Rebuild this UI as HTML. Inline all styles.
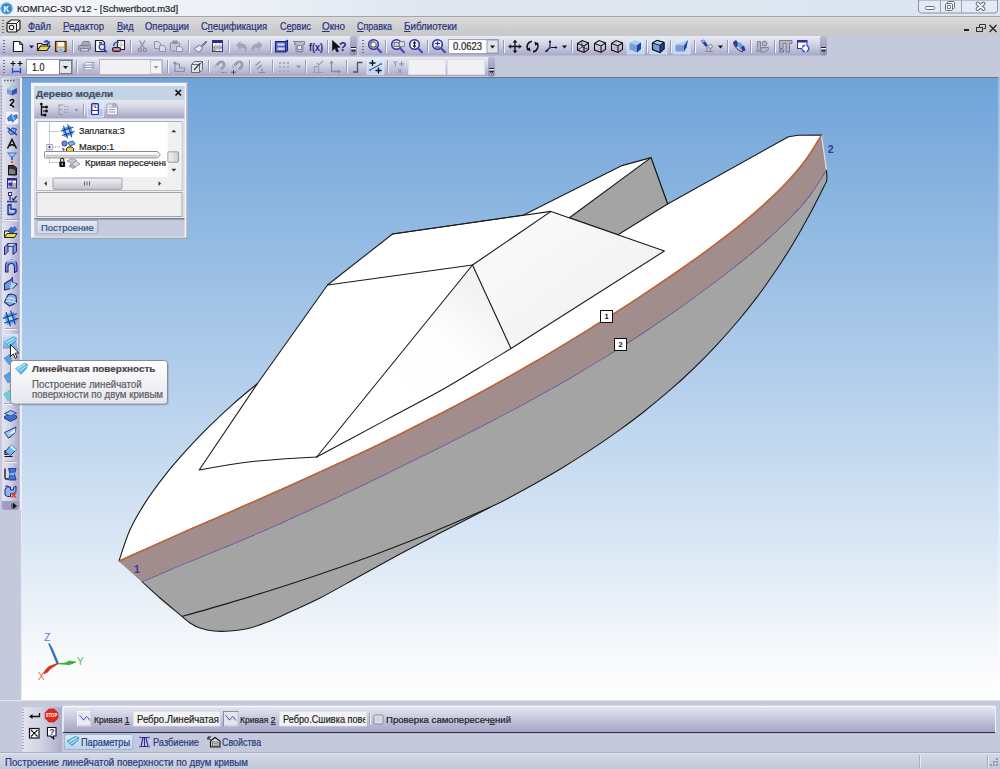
<!DOCTYPE html>
<html lang="ru">
<head>
<meta charset="utf-8">
<title>КОМПАС-3D V12 - [Schwertboot.m3d]</title>
<style>
html,body{margin:0;padding:0;}
body{width:1000px;height:769px;overflow:hidden;position:relative;background:#c4cadc;font-family:"Liberation Sans","DejaVu Sans",sans-serif;font-size:11px;color:#1a1a1a;}
.abs{position:absolute;}
.t{position:absolute;display:inline-block;white-space:nowrap;line-height:12px;transform-origin:0 50%;-webkit-text-stroke:0.2px currentColor;}
#titlebar{left:0;top:0;width:1000px;height:16px;background:linear-gradient(90deg,#f2f4f9 0,#eef1f7 22%,#e0e7f1 42%,#dce5f0 100%);}
#titletext{left:17px;top:1px;font-size:11px;line-height:14px;color:#222;white-space:nowrap;}
#menubar{left:0;top:16px;width:1000px;height:20px;background:linear-gradient(#dadadb,#cdcdcf 60%,#c8c8ca);border-top:1px solid #a4a6ac;box-sizing:border-box;}
.menu{top:19px;font-size:11px;line-height:13px;color:#27317f;white-space:nowrap;}
.menu u{text-decoration:underline;}
#tb1{left:0;top:36px;width:1000px;height:21px;background:#c4cadc;}
#tb2{left:0;top:57px;width:1000px;height:20px;background:#c4cadc;}
#viewport{left:21px;top:77px;width:979px;height:623px;background:linear-gradient(#6fa3d8 0%,#b5d0ec 50%,#dae7f5 75%,#f3f6fa 90%,#ffffff 100%);border-top:1px solid #75757c;border-left:1px solid #e9ecf3;border-right:2px solid rgba(255,255,255,.3);box-sizing:border-box;}
#leftbar{left:0;top:77px;width:22px;height:623px;background:#c4cadc;}
#bottom{left:0;top:700px;width:1000px;height:53px;background:#c4cadc;}
#status{left:0;top:753px;width:1000px;height:16px;background:#c4cadc;}
</style>
</head>
<body>
<div id="titlebar" class="abs"></div>
<div id="menubar" class="abs"></div>
<div id="tb1" class="abs"></div>
<div id="tb2" class="abs"></div>

<svg id="topsvg" class="abs" style="left:0;top:0" width="1000" height="77" viewBox="0 0 1000 77">
<defs>
<linearGradient id="tbg" x1="0" y1="0" x2="0" y2="1">
<stop offset="0" stop-color="#e9ebf3"/><stop offset="0.35" stop-color="#d6d8e8"/><stop offset="0.8" stop-color="#b7b6d4"/><stop offset="1" stop-color="#a9a7c9"/>
</linearGradient>
<linearGradient id="chv" x1="0" y1="0" x2="0" y2="1">
<stop offset="0" stop-color="#b9b9d3"/><stop offset="1" stop-color="#8f8db3"/>
</linearGradient>
<linearGradient id="hl" x1="0" y1="0" x2="0" y2="1">
<stop offset="0" stop-color="#dcebf8"/><stop offset="1" stop-color="#bcd6f0"/>
</linearGradient>
<g id="sep"><rect x="0" y="0" width="1" height="13" fill="#9b9ab6"/><rect x="1" y="0" width="1" height="13" fill="#f1f2f8"/></g>
<g id="grip" fill="#6f6f8c"><rect x="0" y="0" width="2" height="1"/><rect x="0" y="3" width="2" height="1"/><rect x="0" y="6" width="2" height="1"/><rect x="0" y="9" width="2" height="1"/><rect x="0" y="12" width="2" height="1"/></g>
<path id="dd" d="M0 0h5l-2.5 3z"/>
<g id="chev"><rect x="0" y="0" width="7" height="19.500" rx="2" fill="url(#chv)"/><rect x="1" y="12" width="5" height="1" fill="#fff"/><rect x="1" y="11" width="5" height="1" fill="#222"/><path d="M1 14h5l-2.5 3z" fill="#222"/><path d="M2 17.5l2-2.500" stroke="#fff" stroke-width="0.6" fill="none"/></g>
</defs>
<!-- toolbars backgrounds -->
<path d="M2 36h350v19.500H2a2 2 0 0 1-2-2V38a2 2 0 0 1 2-2z" fill="url(#tbg)"/>
<use href="#chev" x="350" y="36"/>
<path d="M361 36h460v19.500H361a2 2 0 0 1-2-2V38a2 2 0 0 1 2-2z" fill="url(#tbg)"/>
<use href="#chev" x="820" y="36"/>
<path d="M2 57h487v19H2a2 2 0 0 1-2-2V59a2 2 0 0 1 2-2z" fill="url(#tbg)"/>
<use href="#chev" x="488" y="57" transform="translate(0,0)"/>
<!-- app logo -->
<circle cx="6.600" cy="8.500" r="6.100" fill="#2e86d0"/><circle cx="6.600" cy="8.500" r="5.400" fill="none" stroke="#7cc0ee" stroke-width="1"/>
<text x="3.300" y="11.800" font-family="Liberation Sans, sans-serif" font-size="9.500" font-weight="bold" fill="#fff">К</text>
<!-- menu icon -->
<g transform="translate(6,19)"><path d="M1 4l4-3h8l1 1v8l-4 3H2l-1-1z" fill="#f2f2f2" stroke="#222" stroke-width="1.2"/><path d="M1.500 4.500h9v8M10.500 4.500l3-3" fill="none" stroke="#222" stroke-width="1"/><circle cx="5.500" cy="8.500" r="2.200" fill="#fff" stroke="#222" stroke-width="1.100"/></g>
<!-- window controls -->
<path d="M918.500 0v10a3 3 0 0 0 3 3h73a3 3 0 0 0 3-3V0z" fill="#e3eaf5" stroke="#8c93a3" stroke-width="1"/>
<path d="M940.500 0v13M961.500 0v13" stroke="#9aa1b1" stroke-width="1"/>
<rect x="925.500" y="6.500" width="9" height="3" rx="1" fill="#fff" stroke="#666b78" stroke-width="1"/>
<rect x="947.500" y="1.500" width="7" height="7" rx="1" fill="#f4f6fa" stroke="#666b78" stroke-width="1"/>
<rect x="945.500" y="3.500" width="7" height="7" rx="1" fill="#f4f6fa" stroke="#666b78" stroke-width="1"/>
<rect x="947.500" y="5.500" width="3" height="3" fill="#fff" stroke="#666b78" stroke-width="0.800"/>
<path d="M977.500 3.500l6 5.500M983.500 3.500l-6 5.500" stroke="#666b78" stroke-width="3.800" stroke-linecap="round"/>
<path d="M977.500 3.500l6 5.500M983.500 3.500l-6 5.500" stroke="#fff" stroke-width="1.800" stroke-linecap="round"/>
<!-- mdi controls -->
<rect x="964" y="29" width="5" height="2" fill="#222"/>
<path d="M979.500 27.500v-3h6v4h-2" fill="none" stroke="#333" stroke-width="1"/><rect x="976.500" y="27.500" width="6" height="4" fill="none" stroke="#333" stroke-width="1"/>
<path d="M989.500 25l7 7M996.500 25l-7 7" stroke="#222" stroke-width="1.300"/>
<!-- grips -->
<use href="#grip" x="2" y="20"/>
<use href="#grip" x="3" y="40"/><use href="#grip" x="362" y="40"/><use href="#grip" x="3" y="60"/>
<!-- TB1 separators -->
<use href="#sep" x="72" y="40"/><use href="#sep" x="130" y="40"/><use href="#sep" x="188" y="40"/><use href="#sep" x="228" y="40"/><use href="#sep" x="270" y="40"/><use href="#sep" x="327" y="40"/>
<use href="#sep" x="385" y="40"/><use href="#sep" x="427" y="40"/><use href="#sep" x="503" y="40"/><use href="#sep" x="571" y="40"/><use href="#sep" x="646" y="40"/><use href="#sep" x="670" y="40"/><use href="#sep" x="694" y="40"/><use href="#sep" x="727" y="40"/><use href="#sep" x="750" y="40"/><use href="#sep" x="774" y="40"/>
<!-- TB2 separators -->
<use href="#sep" x="76" y="60"/><use href="#sep" x="167" y="60"/><use href="#sep" x="208" y="60"/><use href="#sep" x="249" y="60"/><use href="#sep" x="272" y="60"/><use href="#sep" x="305" y="60"/><use href="#sep" x="346" y="60"/><use href="#sep" x="387" y="60"/>
<!-- TB1 icons -->
<!-- new -->
<path d="M13.500 41.500h6l3 3v7h-9z" fill="#fff" stroke="#222" stroke-width="1.200"/><path d="M19.500 41.500v3h3" fill="none" stroke="#222" stroke-width="0.800"/>
<use href="#dd" x="29" y="45.500" fill="#222"/>
<!-- open -->
<path d="M37.500 50.500v-7h4l1 1h5v2" fill="#f4ecaa" stroke="#222" stroke-width="1.100"/><path d="M37.500 50.500l3-4.500h9.500l-3 4.500z" fill="#e8d84e" stroke="#222" stroke-width="1.100"/><path d="M44 41.500c2-1.800 4-1.500 5 0.500l1-0.600-0.500 3-2.800-0.800 1-0.600c-0.800-1.200-2-1.300-3.200-0.500z" fill="#2a4fc0" stroke="#2a4fc0" stroke-width="0.500"/>
<!-- save -->
<rect x="55.500" y="41.500" width="10.500" height="10" fill="#c89a3c" stroke="#3a2a10" stroke-width="1.200"/><rect x="57.500" y="42" width="6.500" height="4.500" fill="#f3f3f3"/><rect x="58" y="48" width="5.500" height="3.500" fill="#8ab4e8" stroke="#fff" stroke-width="0.500"/>
<!-- print (gray) -->
<g fill="#a9adb8" stroke="#777b88" stroke-width="0.900"><path d="M81.500 45.500l1.500-4h6l1.500 4"/><rect x="78.500" y="45.500" width="12" height="4.500" rx="1"/><rect x="80.500" y="48.500" width="8" height="2.500" fill="#d9dbe2"/></g>
<!-- preview -->
<path d="M95.500 40.500h7l2 2v9h-9z" fill="#fff" stroke="#222" stroke-width="1.200"/><circle cx="102" cy="47" r="2.800" fill="#d8e6f8" stroke="#2b3fa8" stroke-width="1.300"/><path d="M104 49.200l3 3" stroke="#2b3fa8" stroke-width="1.600"/><rect x="99" y="42" width="3" height="1.500" fill="#444"/>
<!-- icon3 -->
<rect x="117.500" y="40.500" width="7" height="9" fill="#fff" stroke="#222" stroke-width="1.100"/><path d="M121 40.500v9M117.500 45h7" stroke="#555" stroke-width="0.700" stroke-dasharray="1 1"/><rect x="112.500" y="47.500" width="8" height="4" rx="1" fill="#c44" stroke="#222" stroke-width="1"/><rect x="114" y="48.500" width="5" height="1.500" fill="#8ab4e8"/><path d="M113 46c0-3 2-4.500 4-4.500l0-1.200 2.200 2-2.200 2 0-1.200c-1.500 0-2.500 1-2.500 2.900z" fill="#2a4fc0"/>
<!-- scissors gray -->
<g stroke="#8a8ea0" stroke-width="1.200" fill="none"><path d="M139.500 40.500l5 8M145 40.500l-5 8"/><circle cx="139.800" cy="50" r="1.600"/><circle cx="144.800" cy="50" r="1.600"/></g>
<!-- copy gray -->
<g fill="#d5d7e0" stroke="#9094a6" stroke-width="1"><path d="M154.500 41.500h4l2 2v5h-6z"/><path d="M159.500 45.500h4l2 2v4h-6z"/></g>
<!-- paste gray -->
<g fill="#c4c6d2" stroke="#8c90a2" stroke-width="1"><rect x="170.500" y="42.500" width="9" height="8.500" rx="1"/><rect x="173" y="41" width="4" height="2.500" fill="#9a9eae"/><path d="M176.500 46.500h4l2 2v3h-6z" fill="#e2e3ea"/></g>
<!-- brush -->
<g stroke="#70748a" stroke-width="1" fill="#e8e9f0"><path d="M201.500 45.500l4.500-4.500 1 1-4.500 4.500z" fill="#8d8fa8"/><path d="M194.500 48.500l5-3.500 3 3-3 4c-2.500 0-4-1.500-5-3.500z"/></g>
<!-- table -->
<rect x="212.500" y="40.500" width="10" height="11" fill="#fff" stroke="#3a3a7a" stroke-width="1"/><rect x="212.500" y="40.500" width="10" height="2.500" fill="#2b2b8c"/><path d="M216 43v8.500M219.500 43v8.500M212.500 46h10M212.500 49h10" stroke="#8a8aa8" stroke-width="0.600"/><rect x="213.200" y="46.400" width="2.300" height="2.200" fill="#c08a3a"/><rect x="216.500" y="46.400" width="2.500" height="2.200" fill="#8a98e0"/><rect x="220" y="46.400" width="2" height="2.200" fill="#8a98e0"/><rect x="213.200" y="49.400" width="2.300" height="1.800" fill="#c08a3a"/>
<!-- undo/redo gray -->
<path d="M236 45l4.500-4v2.500c4 0 6.500 2 6.500 5.500 0 1.500-0.800 2.500-2 3.200 0.800-3-1-4.200-4.500-4.200v2.500z" fill="#a2a5b6"/>
<path d="M262.500 45l-4.500-4v2.500c-4 0-6.500 2-6.500 5.500 0 1.500 0.800 2.500 2 3.200-0.800-3 1-4.200 4.500-4.200v2.500z" fill="#a2a5b6"/>
<!-- blue panel -->
<path d="M275.500 41.500h10l2-1v10l-2 1.500h-10z" fill="#5468c8" stroke="#1c2470" stroke-width="1.100"/><rect x="277.500" y="43.500" width="7" height="2" fill="#dfe6f8"/><rect x="277.500" y="47.500" width="7" height="2.500" fill="#cfd8f4"/><path d="M285.500 41.500v10.500" stroke="#1c2470" stroke-width="0.800"/>
<!-- gray icon -->
<g fill="#b9bbc8" stroke="#7d8092" stroke-width="0.900"><path d="M294.500 41.500h10v3h-1.500v7h-7v-7h-1.500z"/><rect x="297.500" y="45.500" width="4" height="4" fill="#e8e9ef"/><path d="M293 41l2.500 1.500M297 52h1.500M300.500 52h1.500" fill="none"/></g>
<!-- f(x) -->
<text x="309" y="50.500" font-family="Liberation Sans, sans-serif" font-size="11" font-weight="bold" fill="#2c1c7c" textLength="14" lengthAdjust="spacingAndGlyphs">f(x)</text>
<!-- cursor ? -->
<path d="M332.500 40.500v10l2.500-2.300 1.800 3.800 1.700-0.800-1.800-3.700 3.300-0.200z" fill="#111" stroke="#111" stroke-width="0.600"/><text x="339" y="51" font-family="Liberation Sans, sans-serif" font-size="12.500" font-weight="bold" fill="#2c2c8c">?</text>
<!-- zoom icons -->
<g id="mag1"><circle cx="373.500" cy="44.500" r="4.800" fill="#e6eefb" stroke="#2f2f96" stroke-width="1.500"/><path d="M377 48.200l4 4" stroke="#4a4ab0" stroke-width="2.200" stroke-linecap="round"/></g>
<path d="M371 42h3.500l1.500 1.500v3.500h-5z" fill="#fff" stroke="#222" stroke-width="0.900"/>
<use href="#mag1" x="23"/><rect x="394" y="42.500" width="5" height="4" fill="#c9d4e8" stroke="#555" stroke-width="0.800"/><rect x="399.500" y="41.500" width="5" height="5" fill="#d9dbe2" stroke="#777" stroke-width="0.800"/>
<use href="#mag1" x="41"/><path d="M414.500 41l1.800 2.500h-3.600zM414.500 48l1.800-2.500h-3.600z" fill="#111"/><rect x="414" y="43" width="1" height="3" fill="#111"/>
<use href="#mag1" x="64"/><path d="M435 43.500h5M437.500 41.500v4M435 47h5" stroke="#2f2f96" stroke-width="1"/>
<!-- zoom field -->
<rect x="448.500" y="39.500" width="50" height="14" fill="#fff" stroke="#a3a6b8" stroke-width="1"/>
<rect x="487" y="40" width="11" height="13" fill="#e1e3ea" stroke="#8b8e9e" stroke-width="0.800"/><use href="#dd" x="490" y="45.500" fill="#111"/>
<!-- move -->
<g stroke="#111" stroke-width="1.300" fill="#111"><path d="M515 41.500v10M510 46.500h10" fill="none"/><path d="M515 40l1.800 2.300h-3.600zM515 53l1.800-2.300h-3.600zM508.500 46.500l2.300-1.800v3.600zM521.500 46.500l-2.300-1.800v3.600z" stroke-width="0.500"/></g>
<!-- rotate -->
<g fill="none" stroke="#111" stroke-width="1.500"><path d="M532 41.200A5.600 5.600 0 0 0 528.300 50.200"/><path d="M533 51.800A5.600 5.600 0 0 0 536.700 42.800"/></g><path d="M526.300 49.200l4.200 2.300-0.600-4.300zM538.700 43.800l-4.200-2.300 0.600 4.300z" fill="#111"/>
<!-- axes -->
<g stroke="#111" stroke-width="1.100" fill="none"><path d="M550 47.500v-6M550 47.500l6 0M550 47.500l-4 4"/></g><path d="M550 40l1.500 2.200h-3zM557.500 47.500l-2.200 1.500v-3zM545.300 52.200l0.600-2.700 2 2z" fill="#111"/><circle cx="550" cy="47.500" r="1.200" fill="#4848c8"/>
<use href="#dd" x="562" y="45.500" fill="#111"/>
<!-- cubes -->
<g id="cubeo" fill="none" stroke="#111" stroke-width="1.100"><path d="M577.500 43.500l4.500-3 6.500 2.500v6.500l-4.500 3-6.500-2.500z"/><path d="M577.500 43.500l6.500 2.500 4.500-3M584 46v6.500"/></g>
<path d="M582 40.500v6.500l-4.500 3M582 47l6.500 2.500" fill="none" stroke="#111" stroke-width="0.700"/>
<use href="#cubeo" x="17"/>
<use href="#cubeo" x="34"/><path d="M616 40.500v6.500l-4.500 3M616 47l6.500 2.500" fill="none" stroke="#777" stroke-width="0.600" stroke-dasharray="1 1"/>
<!-- shaded highlighted -->
<rect x="627" y="38" width="17" height="16" fill="url(#hl)" stroke="#dbe8f6" stroke-width="0.600"/>
<path d="M629.500 43l5.500-2.500 6 2v6.500l-4 3.500-7.500-3z" fill="#7e9bd8"/><path d="M629.500 43l5.500-2.500 6 2-4 2.800z" fill="#9fd8d8"/><path d="M637 45.300l4-2.800v6.500l-4 3.500z" fill="#2c3aa8"/>
<rect x="650" y="38" width="17" height="16" fill="url(#hl)" stroke="#dbe8f6" stroke-width="0.600"/>
<path d="M652.500 43l4.500-2.500 7 2v6.500l-4 3.500-7.500-3z" fill="#7e9bd8" stroke="#111" stroke-width="1.200"/><path d="M652.500 43l4.500-2.500 7 2-4 2.800z" fill="#9fd8d8" stroke="#111" stroke-width="0.900"/><path d="M660 45.300l4-2.800v6.500l-4 3.500z" fill="#2c3aa8" stroke="#111" stroke-width="0.900"/>
<rect x="673" y="38" width="17" height="16" fill="url(#hl)" stroke="#dbe8f6" stroke-width="0.600"/>
<path d="M675.500 45l10-3.500 2.500-1.500-4 11.500h-8.500z" fill="#7e9bd8"/><path d="M684 45.500l4-5.500-1.500 7.500-2.500 4z" fill="#2c3aa8"/><path d="M675.500 45l10-3.500 2.500-1.500-4 5.500z" fill="#a8d4e0"/>
<!-- flashlight -->
<path d="M700.500 41l3.500-1.500 4 6-2 1.500z" fill="#2c3aa8"/><path d="M701 41l3 -1.300 1.200 1.800-3 1.500z" fill="#88b0e8"/><circle cx="710.500" cy="46.500" r="1.800" fill="#e8e9ef" stroke="#777" stroke-width="0.900"/><path d="M705 51.500h8M710.500 48.500v3M707 47v4.500" stroke="#888" stroke-width="0.900" fill="none"/>
<use href="#dd" x="718" y="45.500" fill="#111"/>
<!-- blue shapes -->
<path d="M733 42l3-2 3 4-2.500 3.500z" fill="#2c3aa8"/><path d="M737 44l3-2 4 5-3 3z" fill="#5aa8e0"/><path d="M741 47l3-1.500 1.500 5-3 1z" fill="#2c3aa8"/><path d="M733.500 43c1 4 5 8 9.500 9" stroke="#222" stroke-width="0.900" fill="none"/>
<!-- gray icon 12 -->
<g fill="#b4b6c6" stroke="#7a7d90" stroke-width="0.900"><path d="M757.500 41.500h3v7l-1.500 3h-2z"/><circle cx="764.500" cy="43.500" r="2.500"/><path d="M761.500 47.500h7v2l-3 2.500h-5z"/></g>
<!-- gray T -->
<g fill="#b4b6c6" stroke="#70738a" stroke-width="0.900"><path d="M779.500 40.500h12.500v3h-2.500v8.500h-3.500v-8.500h-3v5h-3.500z"/><rect x="779.500" y="50" width="4" height="2"/></g>
<!-- window refresh -->
<rect x="797.500" y="40.500" width="9.500" height="8" fill="#fff" stroke="#3a2a9a" stroke-width="1"/><rect x="797.500" y="40.500" width="9.500" height="2" fill="#3a2a9a"/><circle cx="805.500" cy="48.500" r="3.300" fill="#fff" stroke="#2a5fd0" stroke-width="1.500" stroke-dasharray="4 1.500"/>
<!-- TB2 icons -->
<g stroke="#111" stroke-width="1.200" fill="none"><path d="M13 61v5M10.500 63.500h5M20 61v5M17.500 63.500h5"/></g><path d="M12.500 67.500v6M20.500 67.500v6M13 71.500h7" stroke="#2b4fd0" stroke-width="1.300" fill="none"/>
<rect x="26.500" y="59.500" width="46" height="15" fill="#fff" stroke="#9a9db2" stroke-width="1"/><rect x="59.500" y="60.500" width="12" height="13" fill="#e4e5ec" stroke="#777a8c" stroke-width="1"/><use href="#dd" x="63" y="66" fill="#111"/>
<g fill="#eeeef3" stroke="#9da0b2" stroke-width="0.900"><path d="M82.500 70l4-2.500h8l-4 2.500z"/><path d="M82.500 67.500l4-2.500h8l-4 2.500z"/><path d="M82.500 65l4-2.500h8l-4 2.500z"/></g>
<rect x="99.500" y="59.500" width="63" height="15" fill="#f1f1f3" stroke="#b3b5c6" stroke-width="1"/><rect x="150.500" y="60.500" width="11" height="13" fill="#f6f6f8" stroke="#c0c2d0" stroke-width="0.800"/><use href="#dd" x="153.500" y="66" fill="#9a9cae"/>
<g fill="none" stroke="#8a8da2" stroke-width="1.100"><path d="M175 61.500v10h9.500M175 64h4.500v4h5v3.500"/><rect x="173.500" y="62" width="3" height="2" fill="#8a8da2" stroke="none"/></g>
<g fill="#e1e2ea" stroke="#666a80" stroke-width="1"><path d="M191.500 64.500l3-3h8v8l-3 3h-8z"/><path d="M191.500 64.500h8v8M199.500 64.500l3-3" fill="none"/><path d="M194 70l6-6.500" stroke="#444" stroke-width="1.200"/></g>
<g transform="translate(220.500,65.500) rotate(45)"><path d="M-3 5V-1A3 3 0 0 1 3 -1V5" fill="none" stroke="#9a9cb2" stroke-width="2.800"/><path d="M-4.400 3.500h2.800M1.600 3.500h2.800" stroke="#dcdde6" stroke-width="1"/></g><path d="M221 72.500h1M223 72.500h1M225 72.500h1" stroke="#777" stroke-width="1"/>
<g transform="translate(238.500,65.500) rotate(45)"><path d="M-3 5V-1A3 3 0 0 1 3 -1V5" fill="none" stroke="#9a9cb2" stroke-width="2.800"/><path d="M-4.400 3.500h2.800M1.600 3.500h2.800" stroke="#dcdde6" stroke-width="1"/></g><path d="M233.500 70v4.500M231.200 72.200h4.600" stroke="#444" stroke-width="0.900"/>
<g stroke="#8a8da2" stroke-width="1.100" fill="none"><path d="M255.500 65.500l5-4M257 69l5-4M259 72.500h6M262 72.500v-4"/></g>
<g fill="#a9abbc"><rect x="279" y="62" width="2" height="2"/><rect x="283" y="62" width="2" height="2"/><rect x="287" y="62" width="2" height="2"/><rect x="279" y="66" width="2" height="2"/><rect x="283" y="66" width="2" height="2"/><rect x="287" y="66" width="2" height="2"/><rect x="279" y="70" width="2" height="2"/><rect x="283" y="70" width="2" height="2"/><rect x="287" y="70" width="2" height="2"/></g><use href="#dd" x="296" y="65.500" fill="#8f92a6"/>
<g stroke="#9a9db0" stroke-width="1.100" fill="none"><path d="M313 72.500h10M314.500 72.500v-6h4v6M317 63l2 2 4-4"/></g>
<g stroke="#8a8da2" stroke-width="1.300" fill="none"><path d="M331.500 62v9.500h8"/></g><path d="M331.500 60.500l2 2.800h-4zM341 71.500l-2.800 2v-4z" fill="#8a8da2"/>
<path d="M353 72h4.500v-9.500h5" stroke="#555" stroke-width="1.300" fill="none"/>
<rect x="367" y="58" width="17" height="16.500" fill="url(#hl)" stroke="#e4eef9" stroke-width="0.600"/>
<path d="M370 70l11-6" stroke="#3a3a9a" stroke-width="1"/><circle cx="370" cy="70" r="1" fill="#5a5ad0"/><circle cx="381" cy="64" r="1" fill="#5a5ad0"/><path d="M372.500 60v6M369.500 63h6M378.500 67.500v6M375.500 70.500h6" stroke="#111" stroke-width="1.300"/>
<g stroke="#8a8da2" stroke-width="1" fill="none"><path d="M393.500 61l1.800 2.500 1.800-2.500M395.300 63.500v3M398 69l3.500 4M401.500 69l-3.500 4M401.500 61.500v5M399 64h5"/></g>
<rect x="408.500" y="59.500" width="37" height="15" fill="#f1f1f3" stroke="#dcdde6" stroke-width="1"/><rect x="447.500" y="59.500" width="37" height="15" fill="#f1f1f3" stroke="#dcdde6" stroke-width="1"/>

</svg>
<div id="leftbar" class="abs"></div>
<div id="viewport" class="abs"></div>
<!--BOAT-START-->
<svg id="boat" class="abs" style="left:22px;top:77px" width="978" height="623" viewBox="22 77 978 623">
<defs>
<linearGradient id="wing" x1="0" y1="0" x2="1" y2="1"><stop offset="0" stop-color="#fcfcfc"/><stop offset="1" stop-color="#eeeeee"/></linearGradient>
<linearGradient id="tri" gradientUnits="userSpaceOnUse" x1="400" y1="400" x2="500" y2="290"><stop offset="0" stop-color="#ffffff"/><stop offset="0.5" stop-color="#fdfdfd"/><stop offset="1" stop-color="#f0f0f0"/></linearGradient>
</defs>
<path d="M142.0 581.6 C145.0 584.3 153.3 592.2 160.0 598.0 C166.7 603.8 177.0 612.2 182.0 616.4 C187.0 620.6 187.0 621.1 190.0 623.0 C193.0 624.9 196.0 626.7 200.0 628.0 C204.0 629.3 209.0 630.5 214.0 631.0 C219.0 631.5 224.0 631.5 230.0 631.0 C236.0 630.5 243.3 629.7 250.0 628.0 C256.7 626.3 263.3 623.7 270.0 621.0 C276.7 618.3 281.7 615.8 290.0 612.0 C298.3 608.2 308.3 604.0 320.0 598.0 C331.7 592.0 346.7 583.3 360.0 576.0 C373.3 568.7 386.7 561.2 400.0 554.0 C413.3 546.8 426.7 539.9 440.0 533.0 C453.3 526.1 468.6 518.4 480.0 512.5 C491.4 506.6 499.2 502.9 508.7 497.9 C518.2 492.9 527.6 487.8 537.0 482.5 C546.4 477.2 555.7 471.8 564.9 466.2 C574.1 460.6 583.1 454.8 592.1 448.9 C601.1 443.0 610.0 436.9 618.7 430.6 C627.4 424.3 636.1 417.9 644.5 411.2 C652.9 404.5 661.2 397.7 669.3 390.7 C677.4 383.7 685.4 376.4 693.1 369.0 C700.8 361.6 708.4 353.9 715.7 346.1 C723.0 338.3 730.2 330.2 737.1 322.0 C744.0 313.8 750.7 305.4 757.2 296.8 C763.7 288.2 769.9 279.4 775.9 270.5 C781.9 261.6 787.8 252.5 793.3 243.3 C798.8 234.1 804.1 224.7 809.2 215.3 C814.3 205.9 820.9 192.5 823.8 186.7 C826.7 180.8 826.4 183.0 826.8 180.2 C827.2 177.4 826.5 171.4 826.4 169.7 L826.4 169.7 C823.7 173.9 816.1 186.9 810.1 194.8 C804.1 202.7 797.4 210.0 790.5 217.2 C783.6 224.4 776.3 231.1 768.9 237.8 C761.5 244.5 753.9 251.0 746.2 257.3 C738.5 263.6 730.6 269.8 722.7 275.9 C714.8 282.0 706.8 288.0 698.7 293.9 C690.7 299.8 682.6 305.6 674.4 311.3 C666.2 317.0 658.0 322.7 649.7 328.2 C641.4 333.7 633.1 339.1 624.7 344.5 C616.3 349.9 607.9 355.2 599.4 360.4 C590.9 365.6 582.4 370.7 573.8 375.7 C565.2 380.7 556.5 385.7 547.8 390.6 C539.1 395.5 530.4 400.3 521.6 405.0 C512.8 409.7 504.0 414.4 495.1 419.0 C486.2 423.6 477.4 428.2 468.5 432.8 C459.6 437.4 450.6 441.8 441.7 446.3 C432.8 450.8 423.8 455.2 414.9 459.6 C406.0 464.0 397.1 468.4 388.1 472.7 C379.2 477.0 370.2 481.4 361.2 485.7 C352.2 490.0 343.2 494.3 334.2 498.5 C325.2 502.7 316.2 506.9 307.1 511.0 C298.1 515.1 289.0 519.3 279.9 523.4 C270.8 527.5 261.6 531.4 252.4 535.4 C243.2 539.4 233.9 543.2 224.6 547.1 C215.3 551.0 206.1 554.7 196.8 558.5 C187.6 562.3 178.2 566.0 169.1 569.9 C160.0 573.8 146.5 579.6 142.0 581.6 Z" fill="#a4a4a4" stroke="#1a1a1a" stroke-width="1.100" stroke-linejoin="round"/>
<path d="M182.0 616.4 C189.5 614.3 212.1 608.0 227.0 603.6 C241.9 599.2 256.8 594.8 271.7 590.1 C286.6 585.4 301.4 580.6 316.1 575.6 C330.9 570.6 345.6 565.5 360.2 560.1 C374.8 554.8 389.3 549.2 403.8 543.5 C418.3 537.8 432.7 531.9 447.1 525.9 C461.5 519.9 482.9 510.4 490.0 507.3" fill="none" stroke="#1a1a1a" stroke-width="1.100"/>
<path d="M119.0 561.0 C123.7 558.9 137.7 552.6 147.0 548.4 C156.3 544.2 165.7 540.0 175.1 535.9 C184.5 531.8 193.9 527.7 203.3 523.6 C212.7 519.5 222.2 515.4 231.6 511.3 C241.0 507.2 250.3 503.0 259.7 498.9 C269.1 494.8 278.4 490.7 287.8 486.5 C297.2 482.3 306.5 478.1 315.8 473.8 C325.1 469.6 334.4 465.3 343.7 461.0 C353.0 456.7 362.3 452.3 371.5 447.9 C380.7 443.5 389.9 438.9 399.1 434.4 C408.3 429.8 417.5 425.2 426.6 420.6 C435.8 416.0 444.9 411.3 454.0 406.5 C463.1 401.7 472.1 396.8 481.1 391.9 C490.1 387.0 499.2 382.0 508.1 377.0 C517.0 372.0 525.9 366.9 534.8 361.8 C543.7 356.7 552.5 351.4 561.3 346.1 C570.1 340.8 578.8 335.5 587.5 330.1 C596.2 324.7 604.9 319.3 613.5 313.8 C622.1 308.3 630.8 302.7 639.3 297.1 C647.8 291.5 656.3 285.8 664.8 280.0 C673.3 274.2 681.7 268.4 690.1 262.5 C698.5 256.6 706.8 250.6 715.0 244.4 C723.2 238.2 731.4 232.0 739.4 225.5 C747.4 219.0 755.2 212.4 762.8 205.5 C770.4 198.6 777.9 191.6 784.9 184.2 C791.9 176.8 798.7 169.1 804.8 160.9 C810.9 152.7 818.7 139.3 821.5 135.0 L826.4 169.7 C823.7 173.9 816.1 186.9 810.1 194.8 C804.1 202.7 797.4 210.0 790.5 217.2 C783.6 224.4 776.3 231.1 768.9 237.8 C761.5 244.5 753.9 251.0 746.2 257.3 C738.5 263.6 730.6 269.8 722.7 275.9 C714.8 282.0 706.8 288.0 698.7 293.9 C690.7 299.8 682.6 305.6 674.4 311.3 C666.2 317.0 658.0 322.7 649.7 328.2 C641.4 333.7 633.1 339.1 624.7 344.5 C616.3 349.9 607.9 355.2 599.4 360.4 C590.9 365.6 582.4 370.7 573.8 375.7 C565.2 380.7 556.5 385.7 547.8 390.6 C539.1 395.5 530.4 400.3 521.6 405.0 C512.8 409.7 504.0 414.4 495.1 419.0 C486.2 423.6 477.4 428.2 468.5 432.8 C459.6 437.4 450.6 441.8 441.7 446.3 C432.8 450.8 423.8 455.2 414.9 459.6 C406.0 464.0 397.1 468.4 388.1 472.7 C379.2 477.0 370.2 481.4 361.2 485.7 C352.2 490.0 343.2 494.3 334.2 498.5 C325.2 502.7 316.2 506.9 307.1 511.0 C298.1 515.1 289.0 519.3 279.9 523.4 C270.8 527.5 261.6 531.4 252.4 535.4 C243.2 539.4 233.9 543.2 224.6 547.1 C215.3 551.0 206.1 554.7 196.8 558.5 C187.6 562.3 178.2 566.0 169.1 569.9 C160.0 573.8 146.5 579.6 142.0 581.6 Z" fill="#a18e8c"/>
<path d="M142.0 581.6 C146.5 579.6 160.0 573.8 169.1 569.9 C178.2 566.0 187.6 562.3 196.8 558.5 C206.1 554.7 215.3 551.0 224.6 547.1 C233.9 543.2 243.2 539.4 252.4 535.4 C261.6 531.4 270.8 527.5 279.9 523.4 C289.0 519.3 298.1 515.1 307.1 511.0 C316.2 506.9 325.2 502.7 334.2 498.5 C343.2 494.3 352.2 490.0 361.2 485.7 C370.2 481.4 379.2 477.0 388.1 472.7 C397.1 468.4 406.0 464.0 414.9 459.6 C423.8 455.2 432.8 450.8 441.7 446.3 C450.6 441.8 459.6 437.4 468.5 432.8 C477.4 428.2 486.2 423.6 495.1 419.0 C504.0 414.4 512.8 409.7 521.6 405.0 C530.4 400.3 539.1 395.5 547.8 390.6 C556.5 385.7 565.2 380.7 573.8 375.7 C582.4 370.7 590.9 365.6 599.4 360.4 C607.9 355.2 616.3 349.9 624.7 344.5 C633.1 339.1 641.4 333.7 649.7 328.2 C658.0 322.7 666.2 317.0 674.4 311.3 C682.6 305.6 690.7 299.8 698.7 293.9 C706.8 288.0 714.8 282.0 722.7 275.9 C730.6 269.8 738.5 263.6 746.2 257.3 C753.9 251.0 761.5 244.5 768.9 237.8 C776.3 231.1 783.6 224.4 790.5 217.2 C797.4 210.0 804.1 202.7 810.1 194.8 C816.1 186.9 823.7 173.9 826.4 169.7" fill="none" stroke="#8f76c6" stroke-width="0.900"/>
<path d="M119 561 L142 581.600" stroke="#8d7d7c" stroke-width="0.800" fill="none"/>
<path d="M821.500 135 L826.400 169.700" stroke="#e4dcdc" stroke-width="1.200" fill="none"/>
<path d="M119.0 561.0 C120.8 555.9 125.4 540.1 129.8 530.3 C134.2 520.4 139.8 511.1 145.7 501.9 C151.5 492.7 158.2 483.9 164.9 475.3 C171.7 466.7 178.9 458.5 186.2 450.4 C193.5 442.3 201.0 434.5 208.7 426.9 C216.4 419.3 224.4 411.8 232.5 404.6 C240.6 397.4 253.3 387.0 257.5 383.5 L327.5 285 L392.5 234 L523.6 215 L622 165.6 L651 157.6 L667.6 204 L788.5 136.7 L798.3 135.3 L821.5 135 C818.7 139.3 810.9 152.7 804.8 160.9 C798.7 169.1 791.9 176.8 784.9 184.2 C777.9 191.6 770.4 198.6 762.8 205.5 C755.2 212.4 747.4 219.0 739.4 225.5 C731.4 232.0 723.2 238.2 715.0 244.4 C706.8 250.6 698.5 256.6 690.1 262.5 C681.7 268.4 673.3 274.2 664.8 280.0 C656.3 285.8 647.8 291.5 639.3 297.1 C630.8 302.7 622.1 308.3 613.5 313.8 C604.9 319.3 596.2 324.7 587.5 330.1 C578.8 335.5 570.1 340.8 561.3 346.1 C552.5 351.4 543.7 356.7 534.8 361.8 C525.9 366.9 517.0 372.0 508.1 377.0 C499.2 382.0 490.1 387.0 481.1 391.9 C472.1 396.8 463.1 401.7 454.0 406.5 C444.9 411.3 435.8 416.0 426.6 420.6 C417.5 425.2 408.3 429.8 399.1 434.4 C389.9 438.9 380.7 443.5 371.5 447.9 C362.3 452.3 353.0 456.7 343.7 461.0 C334.4 465.3 325.1 469.6 315.8 473.8 C306.5 478.1 297.2 482.3 287.8 486.5 C278.4 490.7 269.1 494.8 259.7 498.9 C250.3 503.0 241.0 507.2 231.6 511.3 C222.2 515.4 212.7 519.5 203.3 523.6 C193.9 527.7 184.5 531.8 175.1 535.9 C165.7 540.0 156.3 544.2 147.0 548.4 C137.7 552.6 123.7 558.9 119.0 561.0 Z" fill="#ffffff" stroke="#1a1a1a" stroke-width="1.100" stroke-linejoin="round"/>
<path d="M119.0 561.0 C123.7 558.9 137.7 552.6 147.0 548.4 C156.3 544.2 165.7 540.0 175.1 535.9 C184.5 531.8 193.9 527.7 203.3 523.6 C212.7 519.5 222.2 515.4 231.6 511.3 C241.0 507.2 250.3 503.0 259.7 498.9 C269.1 494.8 278.4 490.7 287.8 486.5 C297.2 482.3 306.5 478.1 315.8 473.8 C325.1 469.6 334.4 465.3 343.7 461.0 C353.0 456.7 362.3 452.3 371.5 447.9 C380.7 443.5 389.9 438.9 399.1 434.4 C408.3 429.8 417.5 425.2 426.6 420.6 C435.8 416.0 444.9 411.3 454.0 406.5 C463.1 401.7 472.1 396.8 481.1 391.9 C490.1 387.0 499.2 382.0 508.1 377.0 C517.0 372.0 525.9 366.9 534.8 361.8 C543.7 356.7 552.5 351.4 561.3 346.1 C570.1 340.8 578.8 335.5 587.5 330.1 C596.2 324.7 604.9 319.3 613.5 313.8 C622.1 308.3 630.8 302.7 639.3 297.1 C647.8 291.5 656.3 285.8 664.8 280.0 C673.3 274.2 681.7 268.4 690.1 262.5 C698.5 256.6 706.8 250.6 715.0 244.4 C723.2 238.2 731.4 232.0 739.4 225.5 C747.4 219.0 755.2 212.4 762.8 205.5 C770.4 198.6 777.9 191.6 784.9 184.2 C791.9 176.8 798.7 169.1 804.8 160.9 C810.9 152.7 818.7 139.3 821.5 135.0" fill="none" stroke="#ec6c2c" stroke-width="1.100"/>
<path d="M651 157.600 L667.600 204 L618 234.800 L569.400 217.800 Z" fill="#a4a4a4" stroke="#1a1a1a" stroke-width="1.100" stroke-linejoin="round"/>
<path d="M472.500 265 L511 348.500 L316.700 457 Z" fill="url(#tri)"/>
<path d="M472.500 265 L551 211.400 L664.400 251 L511 348.500 Z" fill="url(#wing)" stroke="#1a1a1a" stroke-width="1.100" stroke-linejoin="round"/>
<g fill="none" stroke="#1a1a1a" stroke-width="1.100" stroke-linejoin="round" stroke-linecap="round">
<path d="M327.500 285 L472.500 265"/>
<path d="M392.500 234 L551 211.400"/>
<path d="M472.500 265 L316.700 457"/>
<path d="M316.7 457.0 C322.2 454.0 336.9 446.2 350.0 439.2 C363.1 432.2 379.7 423.2 395.0 415.0 C410.3 406.8 427.9 397.8 441.7 390.0 C455.5 382.2 466.4 375.4 478.0 368.5 C489.6 361.6 505.5 351.8 511.0 348.5"/>
<path d="M257.500 383.500 L199.200 470 C215 467 235 463.500 255 461.200 C275 459.200 295 457.800 316.700 457"/>
</g>
<rect x="600.500" y="310.500" width="12" height="12" fill="#fff" stroke="#111" stroke-width="1"/>
<text x="604.400" y="319.400" font-family="Liberation Sans, sans-serif" font-size="7.500" font-weight="bold" fill="#111">1</text>
<rect x="614.500" y="338.500" width="12" height="12" fill="#fff" stroke="#111" stroke-width="1"/>
<text x="618.400" y="347.400" font-family="Liberation Sans, sans-serif" font-size="7.500" font-weight="bold" fill="#111">2</text>
<text x="827.800" y="153.200" font-family="Liberation Sans, sans-serif" font-size="10.500" font-weight="bold" fill="#3538a0">2</text>
<text x="134" y="573.300" font-family="Liberation Sans, sans-serif" font-size="10.500" font-weight="bold" fill="#3538a0">1</text>
<g>
<path d="M57.400 663.700 L48.600 642.800 L50.800 645.500 L52.500 648 L53.700 651 L55.500 655 L58.800 663 Z" fill="#2f7dd2"/>
<path d="M57.400 663.700 L49 643.500" stroke="#2a6fc4" stroke-width="1.600" fill="none"/>
<path d="M57.400 663.700 L66 663 L69 661 L75.800 662.200 L69 664.600 L66 664.200 Z" fill="#3fae3a" stroke="#3fae3a" stroke-width="1"/>
<path d="M57.400 663.700 L50 668.500 L47.500 671.500 L44.200 673.200 L46 670 L49 667 Z" fill="#d8381a" stroke="#d8381a" stroke-width="1.600" stroke-linejoin="round"/>
<text x="44.300" y="640.800" font-family="Liberation Sans, sans-serif" font-size="10" fill="#4a7fd0">Z</text>
<text x="77" y="665" font-family="Liberation Sans, sans-serif" font-size="10" fill="#5ab84a">Y</text>
<text x="38" y="680.300" font-family="Liberation Sans, sans-serif" font-size="10" fill="#e8683a">X</text>
</g>
</svg>
<!--BOAT-END-->
<!--LEFT-START-->
<svg id="leftsvg" class="abs" style="left:0;top:77px" width="40" height="440" viewBox="0 77 40 440">
<defs>
<linearGradient id="lbg" x1="0" y1="0" x2="1" y2="0"><stop offset="0" stop-color="#e4e5ee"/><stop offset="0.45" stop-color="#d2d3e4"/><stop offset="1" stop-color="#a9a7c9"/></linearGradient>
<linearGradient id="lsel" x1="0" y1="0" x2="0" y2="1"><stop offset="0" stop-color="#d6e2f4"/><stop offset="0.5" stop-color="#b4ccec"/><stop offset="1" stop-color="#6fa0dc"/></linearGradient>
<linearGradient id="cy" x1="0" y1="0" x2="1" y2="1"><stop offset="0" stop-color="#8fe0e8"/><stop offset="1" stop-color="#2f8fd8"/></linearGradient>
</defs>
<!-- toolbar 1 bg -->
<path d="M2 78h18v143H2z" fill="url(#lbg)"/>
<path d="M1.500 86v134" stroke="#8886a8" stroke-width="1.400" stroke-dasharray="1 2.200"/>
<path d="M4 80.500h12" stroke="#5c5c78" stroke-width="1.400" stroke-dasharray="1.600 1.400"/>
<!-- toolbar 2 bg -->
<path d="M2 222h17.500v277a2 2 0 0 1-2 2H4a2 2 0 0 1-2-2z" fill="url(#lbg)"/>
<path d="M2 501h17.500v6a3 3 0 0 1-3 3H5a3 3 0 0 1-3-3z" fill="#9f9dc2"/>
<path d="M12 503.500v5M13.500 503.500l3 2.500-3 2.500z" fill="#111" stroke="#111" stroke-width="0.800"/>
<path d="M20.500 78v432" stroke="#eef0f6" stroke-width="1"/>
<!-- separators -->
<path d="M5 220.500h12M5 329.500h12M4 404.500h13M5 462.500h12" stroke="#f4f4fa" stroke-width="1"/>
<path d="M5 219.500h12M5 328.500h12M4 403.500h13M5 461.500h12" stroke="#9c9ab8" stroke-width="0.800"/>
<!-- icons tb1 -->
<path d="M7 89l5-3 5 2v5l-5 2.500-5-2z" fill="#7d9ad8"/><path d="M7 89l5-3 5 2-5 2.500z" fill="#9ed8d4"/><path d="M12 90.500l5-2.500v5l-5 2.500z" fill="#3c50b4"/>
<path d="M10 101c1.500-2.500 4.500-1.500 3.500 0.500l-3 3.500c1 0.500 2.500 0.500 3.500 2.500" fill="none" stroke="#111" stroke-width="1.500"/>
<rect x="6.300" y="112" width="11.700" height="11.800" rx="1" fill="#eef2f8" stroke="#f8fafd" stroke-width="0.600"/>
<path d="M7.500 118l4.500-4 1.500 2 3-1.500 1 3-5 4.500-1.500-2-2.500 1z" fill="#3a8fe0" stroke="#2a3aa0" stroke-width="0.700"/><path d="M12 114l2.500 6.500" stroke="#bfe4f4" stroke-width="1"/>
<path d="M7.500 128l9 7M8 131.500l4.500-3.500 4 1-2 4.500-4 1z" fill="#6fb8e8" stroke="#2a3aa8" stroke-width="1"/><path d="M7.500 127.500l9.500 7.500" stroke="#2a3aa8" stroke-width="1.200"/>
<path d="M7.500 148.500l4.500-9 4.500 9M9.500 146c1.500-1.500 3.500-1.500 5 0" fill="none" stroke="#111" stroke-width="1.600"/>
<path d="M7 152.500h10l-4 5v2.500h-2v-2.500z" fill="#3a6fd0"/><path d="M8.500 153.500h7l-3.500 3.500z" fill="#9fd0f0"/><circle cx="12" cy="162" r="1.200" fill="#e8581a"/>
<path d="M8.500 165.500h5.500l2.500 2.500v7h-8z" fill="#333" stroke="#111" stroke-width="1"/><path d="M10 169v5M12 169v5M14 170v4" stroke="#ddd" stroke-width="0.900"/>
<rect x="7.500" y="178.500" width="9" height="9.500" fill="#f0f0f4" stroke="#2a2a8a" stroke-width="1"/><rect x="7.500" y="178.500" width="9" height="2" fill="#2a2a8a"/><rect x="8.500" y="182.500" width="3.500" height="4" fill="#3a4ab8"/><path d="M12 180.500v7.500M7.500 184h9" stroke="#2a2a8a" stroke-width="0.700"/><rect x="13" y="184.500" width="3" height="2.500" fill="#c8a868"/>
<rect x="8.500" y="192.500" width="3" height="3" fill="#fff" stroke="#2a2a8a" stroke-width="1"/><path d="M10 195.500v4.500M7 201.500h10" stroke="#2a2a8a" stroke-width="1.300"/><path d="M12 198l1.500 2 3-4" fill="none" stroke="#111" stroke-width="1.100"/><path d="M7 202.300h10" stroke="#4aa0e0" stroke-width="1"/>
<path d="M8 210v-5l3-0.500v4.500l5 0.500v3l-2.500 2h-5.500z" fill="#8ab8e8" stroke="#22228a" stroke-width="1.300" stroke-linejoin="round"/><path d="M9.500 211h4.500" stroke="#c8f0e8" stroke-width="1.200"/>
<!-- icons tb2 -->
<path d="M4.500 237.500v-6.500h3.500l1 1h4v1.500" fill="#f4ecaa" stroke="#222" stroke-width="1"/><path d="M4.500 237.500l2.500-4h10l-2.500 4z" fill="#e8dc50" stroke="#222" stroke-width="1"/><path d="M8 231l3-4 2 1.500 1.500-2 2.500 3-4.500 3.500z" fill="#3a6fd8" stroke="#2a3aa8" stroke-width="0.600"/>
<path d="M4.500 247l3.500-3.500v8l-3.500 3.500z" fill="#7d9ad8" stroke="#22228a" stroke-width="1"/><path d="M8 243.500h8.500v5l-3 0v-2h-5.500z" fill="#a8e0d8" stroke="#22228a" stroke-width="0.800"/><path d="M13 246.500l3.500-3v8l-3.500 3z" fill="#7d9ad8" stroke="#22228a" stroke-width="1"/>
<path d="M5.500 272v-6c0-4 3-6 6.500-6s5 2.500 5 6v5l-2.500 1.500v-6c0-2-1-3-3-3s-3.500 1-3.500 3.500v5z" fill="#7d9ad8" stroke="#22228a" stroke-width="1.100" stroke-linejoin="round"/><path d="M7 262c2-2 6-2.500 8.500-0.500" stroke="#a8d8f0" stroke-width="1.400" fill="none"/>
<path d="M4.500 283.500l6-3.500 2-2.500v5l4.500 1.500-4 4-8.500 2z" fill="#7d9ad8" stroke="#22228a" stroke-width="1.100" stroke-linejoin="round"/><path d="M11 282l-1 7.500 3-1.500 3.500-4z" fill="#a8e0e0"/><path d="M10.500 280l2-2.500v5" fill="#4858b8"/>
<path d="M4.500 302l3.500-7c2-1.500 6-1 8 1l0.500 6c-2 2-4 3-7 4z" fill="#8ab0e0" stroke="#22228a" stroke-width="1.100" stroke-linejoin="round"/><path d="M6.500 298.500c3-1 6-0.500 9 1M5.500 301.500c3-1 7-0.500 10.500 1.500" stroke="#c8f0f0" stroke-width="1.300" fill="none"/>
<g transform="translate(10.6,318.4) rotate(-18) scale(1.12)"><rect x="-4.600" y="-4.600" width="9.200" height="9.200" fill="#4aa8e8"/><rect x="-2.200" y="-2.200" width="4.400" height="4.400" fill="#a8e4d8"/><path d="M-2.200 -6.600v13.200M2.200 -6.600v13.200M-6.600 -2.200h13.200M-6.600 2.200h13.200" stroke="#2838a0" stroke-width="1.100" fill="none"/></g>
<rect x="3" y="334.500" width="15" height="14" fill="url(#lsel)"/><path d="M3.500 334.500h14v13.500" fill="none" stroke="#e8f0fa" stroke-width="0.700"/>
<path d="M4 342.500l9-6 3.500 1.500-1 4.500-6 4.500z" fill="url(#cy)" stroke="#3a9ad0" stroke-width="0.500"/><path d="M6 343l8-5M8 345l7.500-5.500" stroke="#d0f8f8" stroke-width="0.900" fill="none"/>
<!-- hidden partially icons -->
<path d="M4 358l6-3.500 2 8-3 2z" fill="#4aa8e0" stroke="#2a3aa8" stroke-width="0.600" stroke-dasharray="1.500 1"/>
<path d="M4 376l6-4 1 9-3 2z" fill="#4aa8e0" stroke="#2a3aa8" stroke-width="0.600" stroke-dasharray="1.500 1"/>
<path d="M4 394l6-4 1 9-3 2z" fill="#6fd0d8" stroke="#2a7ab8" stroke-width="0.600" stroke-dasharray="1.500 1"/>
<path d="M4.500 416.500l6-3 6 2.500-6 3z" fill="#4a90d8" stroke="#22228a" stroke-width="0.800"/><path d="M4.500 413.500l6-3 6 2.500-6 3z" fill="#8ad0e8" stroke="#22228a" stroke-width="0.800"/><path d="M4.500 416.500v2l6 3 6-3v-2.500" fill="#3a70c8" stroke="#22228a" stroke-width="0.800"/>
<path d="M4.500 432.500l11.500-5.500-1.500 6.500-6 4.500z" fill="#8ad0e8" stroke="#22228a" stroke-width="0.900" stroke-linejoin="round"/><path d="M9 434l6.500-5.500-1 4.500z" fill="#f4f4f8"/><path d="M8.500 438l3-1.500" stroke="#555" stroke-width="1"/>
<path d="M5 452l6-7 5.500 4.500-6 6z" fill="#6fc0e8" stroke="#22228a" stroke-width="0.900" stroke-linejoin="round"/><path d="M11 445l5.500 4.500-1.500 1.500-5.500-4.500z" fill="#d0f4f0"/><path d="M4.500 456.500h8M4.500 454.500h3M5 450v4" stroke="#111" stroke-width="1.100" fill="none"/>
<path d="M5 468.500v9c0 2 2 2 3 1" fill="none" stroke="#111" stroke-width="1.300"/><path d="M8.500 468.500h7.500l-1.500 5.500 1.500 6h-7.500l1.500-6z" fill="#3a78d0" stroke="#22228a" stroke-width="0.800"/><path d="M10 475l1.500-2 1.500 2 1.500-2.500" stroke="#c8f0f8" stroke-width="0.900" fill="none"/>
<path d="M5 489l2.500-2h3v3h3v-2.500l2.500-1.500v5.500l-2.500 2h-3v3h-3l-2.500-1.500z" fill="#8ab8e8" stroke="#22228a" stroke-width="1" stroke-linejoin="round"/><path d="M5 487c1-1.500 3-1.500 4 0" fill="none" stroke="#22228a" stroke-width="1"/><path d="M11.500 493l4.500 4.500M16 493l-4.500 4.500" stroke="#e8381a" stroke-width="1.500"/>
<!-- mouse cursor -->
<path d="M10.500 344.500v12l2.800-2.600 2 4.400 1.800-0.900-2-4.200 3.600-0.300z" fill="#fff" stroke="#111" stroke-width="0.900" stroke-linejoin="round"/>
</svg>
<!--LEFT-END-->
<!--TREE-START-->
<svg id="treesvg" class="abs" style="left:28px;top:80px" width="164" height="162" viewBox="28 80 164 162">
<defs>
<linearGradient id="ptb" x1="0" y1="0" x2="0" y2="1"><stop offset="0" stop-color="#e6e9f1"/><stop offset="0.35" stop-color="#d6d8e8"/><stop offset="1" stop-color="#a6a3c6"/></linearGradient>
<linearGradient id="thumb" x1="0" y1="0" x2="1" y2="0"><stop offset="0" stop-color="#f4f4f6"/><stop offset="1" stop-color="#c9cad4"/></linearGradient>
<linearGradient id="thumbh" x1="0" y1="0" x2="0" y2="1"><stop offset="0" stop-color="#f2f2f4"/><stop offset="1" stop-color="#c4c5cf"/></linearGradient>
<linearGradient id="tabg" x1="0" y1="0" x2="0" y2="1"><stop offset="0" stop-color="#e4eaf5"/><stop offset="1" stop-color="#c8d3e8"/></linearGradient>
</defs>
<!-- outer frame -->
<rect x="31" y="82.700" width="156.500" height="155.800" fill="#f3f5f8"/>
<path d="M187 83.500v155M31.500 238.200h156" stroke="#8d919d" stroke-width="1" fill="none"/>
<rect x="34.400" y="86" width="150" height="150.500" fill="#c5cbdd"/>
<!-- title row -->
<rect x="34.400" y="86" width="150" height="13.800" fill="#c4d4e4"/>
<path d="M175.500 90l5.500 5.500M181 90l-5.500 5.500" stroke="#111" stroke-width="1.700"/>
<!-- toolbar row -->
<rect x="34.400" y="99.800" width="150" height="18.800" fill="url(#ptb)"/>
<rect x="34.400" y="118.600" width="150" height="2.400" fill="#e9ebf1"/>
<!-- toolbar icons -->
<g stroke="#111" stroke-width="1.400" fill="none"><path d="M41.500 103.500v11.500h3M41.500 107h3"/></g><circle cx="41.300" cy="104" r="1.300" fill="#111"/><circle cx="46.500" cy="107" r="1.500" fill="#111"/><circle cx="46.500" cy="111" r="1.500" fill="#111"/><circle cx="45" cy="115" r="1.500" fill="#111"/><path d="M43 107h3M43 111h3" stroke="#111" stroke-width="1"/>
<g stroke="#9698aa" stroke-width="1" fill="none"><path d="M59 104.500v10.500M59 105h4M59 109.500h3M59 114.500h4"/><path d="M64.500 106.500h4M64.500 109.500h4M64.500 112.500h4M64 104.500v1M64 111v1" stroke-dasharray="1.500 1"/></g>
<path d="M74.300 109h4.200l-2.100 2.600z" fill="#8d90a4"/>
<path d="M83.500 104v11.500" stroke="#9c9ab8" stroke-width="1"/><path d="M84.500 104v11.500" stroke="#f0f1f7" stroke-width="1"/>
<rect x="87.200" y="101.200" width="16.400" height="16" fill="#d4e2f4"/><rect x="87.200" y="109" width="16.400" height="8.200" fill="#b4ccec"/><rect x="87.500" y="101.500" width="15.800" height="15.400" fill="none" stroke="#e6eefa" stroke-width="0.700"/>
<rect x="91.700" y="103.700" width="6.600" height="10.600" rx="0.800" fill="#fff" stroke="#3a2a9a" stroke-width="1.400"/><path d="M92 110.500h6" stroke="#3a2a9a" stroke-width="1"/><path d="M93.500 106h2.500M94.500 107.500h2" stroke="#444" stroke-width="0.900"/><rect x="92.400" y="111.200" width="5.200" height="2.600" fill="#fff"/>
<g stroke="#9698aa" stroke-width="0.900" fill="#eceef3"><path d="M107 104h8l2.500 2v9h-10.500z"/><path d="M109 107h4M109 109.500h6M109 112h6" fill="none"/><rect x="113" y="104" width="3" height="3" fill="#c8cad6"/></g>
<!-- tree box -->
<rect x="36.800" y="121.400" width="145.200" height="69.300" fill="#fff" stroke="#9a9daa" stroke-width="1"/>
<rect x="35.800" y="120.600" width="147.200" height="71" fill="none" stroke="#eef0f4" stroke-width="1"/>
<!-- scrollbar v -->
<rect x="167.600" y="122" width="14" height="55" fill="#f0f0f1"/>
<path d="M171.200 132.300l2.600-2.600 2.600 2.600z" fill="#333"/><path d="M171.200 168.800l2.600 2.600 2.600-2.600z" fill="#333"/>
<rect x="167.900" y="151.800" width="10.600" height="10.400" rx="1" fill="url(#thumb)" stroke="#8e909c" stroke-width="0.900"/>
<!-- h scrollbar -->
<rect x="37.300" y="177" width="144.200" height="13.200" fill="#f0f0f1"/>
<path d="M46.800 181.200l-2.600 2.400 2.600 2.400z" fill="#333"/><path d="M158.500 181.200l2.600 2.400-2.600 2.400z" fill="#333"/>
<rect x="53" y="178" width="69" height="11.300" rx="1.200" fill="url(#thumbh)" stroke="#9a9ca8" stroke-width="0.900"/>
<path d="M84.500 181.500v4M87 181.500v4M89.500 181.500v4" stroke="#555" stroke-width="0.900"/>
<!-- tree lines -->
<path d="M49.500 122.500v40.500M49.500 131.500h10M53 147h7M49.500 162.500h9" stroke="#888" stroke-width="0.900" stroke-dasharray="1 1" fill="none"/>
<rect x="46.800" y="144.400" width="5.400" height="5.400" fill="#fff" stroke="#8a8ea0" stroke-width="0.800"/><path d="M48 147.100h3M49.500 145.600v3" stroke="#2a3aa0" stroke-width="0.900"/>
<!-- patch icon -->
<g transform="translate(67.6,131.4) rotate(-18) scale(1.0)"><rect x="-4.600" y="-4.600" width="9.200" height="9.200" fill="#4aa8e8"/><rect x="-2.200" y="-2.200" width="4.400" height="4.400" fill="#a8e4d8"/><path d="M-2.200 -6.600v13.200M2.200 -6.600v13.200M-6.600 -2.200h13.200M-6.600 2.200h13.200" stroke="#2838a0" stroke-width="1.100" fill="none"/></g>
<!-- macro icon -->
<circle cx="64.500" cy="143.500" r="2.600" fill="#7d8ad8" stroke="#2838a0" stroke-width="0.900"/><path d="M68 142.500l5-1.500 2 3-5 2z" fill="#6fc0e8" stroke="#2838a0" stroke-width="0.800"/><path d="M62 147.500l3 1.500-2 2.500z" fill="#4858c0"/><path d="M66.500 152.500v-4l1.500-1.500h4l1.500 1.500v4z" fill="#e8d048" stroke="#222" stroke-width="1"/><path d="M64 149.500c1 1.500 1.500 2 2 3" stroke="#6a4ab0" stroke-width="0.800" fill="none" stroke-dasharray="1 1"/>
<!-- drag bar -->
<path d="M45.500 151.500h112l2.800 3.200-2.800 3.200h-112a1 1 0 0 1-1-1v-4.400a1 1 0 0 1 1-1z" fill="#fbfbfb" stroke="#8a8a8a" stroke-width="1"/><path d="M46 155.800h111.500" stroke="#c8c8c8" stroke-width="2"/>
<!-- lock + gray icon -->
<rect x="59.300" y="161.500" width="5.800" height="5.400" rx="0.800" fill="#111"/><path d="M60.600 161.500v-1.800c0-2 3.200-2 3.200 0v1.800" fill="none" stroke="#111" stroke-width="1.100"/><rect x="61.700" y="163.200" width="1" height="2" fill="#fff"/>
<g fill="#c9cad2" stroke="#8b8d98" stroke-width="0.800"><path d="M67 161l5-2.500 5 2-4.500 3z"/><path d="M70 164.500l6-3 4 2.500-5.500 3.500z" fill="#dcdde3"/><path d="M69 166l3.500-1.500 3 2.500-3 1.500z" fill="#b4b6c0"/></g>
<!-- second box -->
<rect x="36.800" y="192.400" width="145.200" height="24.200" fill="#efeff0" stroke="#9a9daa" stroke-width="1"/>
<rect x="35.800" y="191.600" width="147.200" height="26" fill="none" stroke="#f0f2f6" stroke-width="0.800"/>
<path d="M34.400 219h150" stroke="#3c3c44" stroke-width="1.200"/>
<!-- tab -->
<rect x="34.400" y="219.600" width="150" height="16.900" fill="#c5cbdd"/>
<path d="M37.300 220.500h60.500v11a1.500 1.500 0 0 1-1.500 1.500h-57.500a1.500 1.500 0 0 1-1.500-1.500z" fill="url(#tabg)" stroke="#8e96ac" stroke-width="0.800"/>
<path d="M38 220.500v11.500M38.300 232.300h58" stroke="#f2f5fa" stroke-width="0.800" fill="none"/>
</svg>
<!--TREE-END-->
<!--TIP-START-->
<svg id="tipsvg" class="abs" style="left:8px;top:358px" width="164" height="50" viewBox="8 358 164 50">
<defs><linearGradient id="tipg" x1="0" y1="0" x2="0" y2="1"><stop offset="0" stop-color="#ffffff"/><stop offset="1" stop-color="#e4e6ef"/></linearGradient>
<linearGradient id="cy2" x1="0" y1="0" x2="1" y2="1"><stop offset="0" stop-color="#9fe8ec"/><stop offset="1" stop-color="#2f8fd8"/></linearGradient></defs>
<rect x="11.500" y="361.500" width="157.300" height="44" rx="3.500" fill="#6d7a8c" opacity="0.350"/>
<rect x="10.500" y="360.500" width="157" height="43.600" rx="3.200" fill="url(#tipg)" stroke="#8a8c90" stroke-width="1"/>
<path d="M15.500 368.500l9-5.500 3.500 1.500-1.500 4-5.500 6z" fill="url(#cy2)" stroke="#3a9ad0" stroke-width="0.500"/><path d="M18 368.500l7-4.500M20 371l6.500-5" stroke="#d8fafa" stroke-width="0.900" fill="none"/>
</svg>
<!--TIP-END-->
<!--BOT-START-->
<svg id="botsvg" class="abs" style="left:0;top:700px" width="1000" height="69" viewBox="0 700 1000 69">
<defs>
<linearGradient id="stg" x1="0" y1="0" x2="0" y2="1"><stop offset="0" stop-color="#d3d8e6"/><stop offset="1" stop-color="#c2c8da"/></linearGradient>
<linearGradient id="bbar" x1="0" y1="0" x2="0" y2="1"><stop offset="0" stop-color="#e4e6f0"/><stop offset="0.3" stop-color="#d2d3e5"/><stop offset="1" stop-color="#a5a2c5"/></linearGradient>
<linearGradient id="bleft" x1="0" y1="0" x2="1" y2="0"><stop offset="0" stop-color="#e2e4ee"/><stop offset="0.5" stop-color="#d0d1e3"/><stop offset="1" stop-color="#aeabcc"/></linearGradient>
<linearGradient id="seltab" x1="0" y1="0" x2="0" y2="1"><stop offset="0" stop-color="#dce8f6"/><stop offset="1" stop-color="#bdd2ec"/></linearGradient>
<linearGradient id="cy3" x1="0" y1="0" x2="1" y2="1"><stop offset="0" stop-color="#9fe8ec"/><stop offset="1" stop-color="#2f8fd8"/></linearGradient>
</defs>
<rect x="0" y="700" width="1000" height="69" fill="#c4cadc"/>
<rect x="0" y="700" width="1000" height="1" fill="#dfe3ee"/>
<!-- left mini toolbar -->
<path d="M24 707h38v45H24a2 2 0 0 1-2-2v-41a2 2 0 0 1 2-2z" fill="url(#bleft)"/>
<path d="M23 709v41" stroke="#8886a8" stroke-width="1.400" stroke-dasharray="1 2"/>
<path d="M31 716.500h8.500v-3.500" fill="none" stroke="#111" stroke-width="1.300"/><path d="M29 716.500l3.500-2.500v5z" fill="#111"/>
<path d="M48.800 709h5.400l3.800 3.800v5.400l-3.800 3.800h-5.400l-3.800-3.800v-5.400z" fill="#e02818" stroke="#b01808" stroke-width="0.600"/>
<text x="45.800" y="717.300" font-family="Liberation Sans, sans-serif" font-size="4.600" font-weight="bold" fill="#fff" textLength="11.400" lengthAdjust="spacingAndGlyphs">STOP</text>
<rect x="29.500" y="728.500" width="9.500" height="9.500" fill="#fff" stroke="#111" stroke-width="1.200"/><path d="M31 730l2 2M37.500 730l-2 2M31 736.500l2-2M37.500 736.500l-2-2" stroke="#111" stroke-width="1.200"/><rect x="33" y="732" width="2.500" height="2.500" fill="#111"/>
<path d="M47.500 727.500h8.500v8.500h-3l1 3-3.500-3h-3z" fill="#fff" stroke="#111" stroke-width="1.100" stroke-linejoin="round"/>
<text x="49.300" y="734.800" font-family="Liberation Sans, sans-serif" font-size="8.500" font-weight="bold" fill="#2c2c9c">?</text>
<!-- property bar -->
<path d="M65 706.500h930v26H65a2 2 0 0 1-2-2v-22a2 2 0 0 1 2-2z" fill="url(#bbar)"/>
<path d="M63 732.600h932.500" stroke="#26262e" stroke-width="1"/>
<path d="M995.500 706.500v26" stroke="#f2f3f8" stroke-width="1"/><path d="M63 732V708.500a2 2 0 0 1 2-2H995" stroke="#f6f7fb" stroke-width="1.400" fill="none"/>
<!-- curve buttons -->
<rect x="77.500" y="711.500" width="13.500" height="14.500" fill="#e9ebf3" stroke="#f6f7fb" stroke-width="1"/><path d="M91 711.500v14.500h-13.500" fill="none" stroke="#a7a9bc" stroke-width="0.800"/>
<path d="M79.500 715.500C81 716 82.500 719 83.500 720C84.500 720 85.500 717 86.500 716.500C87.500 716.500 89 719.500 90 720.500" fill="none" stroke="#3a3aa8" stroke-width="1"/>
<rect x="223.500" y="711.500" width="14.500" height="14.500" fill="#e3e5ee" stroke="#8c8ea2" stroke-width="1"/><path d="M238 712v14h-14" fill="none" stroke="#f4f5fa" stroke-width="0.800"/>
<path d="M225.500 715.500C227 716 228.500 719 229.500 720C230.500 720 231.500 717 232.500 716.500C233.500 716.500 235 719.500 236 720.500" fill="none" stroke="#3a3aa8" stroke-width="1"/>
<!-- fields -->
<rect x="133.600" y="711.400" width="86.400" height="14.600" fill="#f3f3f4" stroke="#dfe0e8" stroke-width="0.800"/>
<rect x="279.400" y="711.400" width="87" height="14.600" fill="#f3f3f4" stroke="#dfe0e8" stroke-width="0.800"/>
<path d="M369.500 713v12" stroke="#9c9ab8" stroke-width="1"/><path d="M370.500 713v12" stroke="#f0f1f7" stroke-width="1"/>
<rect x="374" y="715" width="9" height="9" rx="1" fill="#e3e4ea" stroke="#8a8c98" stroke-width="1"/><rect x="375.500" y="716.500" width="6" height="6" fill="#d6d7df"/>
<!-- tabs -->
<rect x="64.500" y="734.500" width="68.500" height="15" rx="1.500" fill="url(#seltab)" stroke="#9db4d4" stroke-width="1"/>
<path d="M67 741l8-4.500 4 1-1 3-6 5z" fill="url(#cy3)" stroke="#2a78c0" stroke-width="0.600"/><path d="M69.500 741.500l7-4M71 744l6.500-4.500" stroke="#d8fafa" stroke-width="0.800" fill="none"/>
<g stroke="#2a2a9a" stroke-width="1.100" fill="none"><path d="M139 737.500h11M139 746.500h11M144.500 737.500v9M141 746l2-8M148 746l-2-8"/></g><circle cx="140" cy="737.500" r="1" fill="#8a5ad0"/><circle cx="149" cy="737.500" r="1" fill="#8a5ad0"/><circle cx="140" cy="746.500" r="1" fill="#8a5ad0"/><circle cx="149" cy="746.500" r="1" fill="#8a5ad0"/>
<path d="M208 737.500l2.500 2.500M208 737v3M208 737h3" stroke="#111" stroke-width="1" fill="none"/><path d="M210.500 741l4.500-3.500 5 3.500v6h-9.500z" fill="#d8dae2" stroke="#111" stroke-width="1.100"/><rect x="212.500" y="742" width="5.500" height="4" fill="#fff" stroke="#333" stroke-width="0.700"/><path d="M213.500 743.500h3.500M213.500 745h3.500" stroke="#333" stroke-width="0.600"/>
<!-- status bar -->
<path d="M0 752.500h1000" stroke="#aab0c6" stroke-width="1"/><path d="M0 753.500h1000" stroke="#e3e6f0" stroke-width="1"/>
<rect x="0" y="754" width="1000" height="15" fill="url(#stg)"/>
<path d="M919.500 755v13M987.500 755v13" stroke="#a9aec4" stroke-width="1"/><path d="M920.500 755v13M988.500 755v13" stroke="#e6e9f2" stroke-width="1"/>
<g fill="#9298b0"><rect x="996" y="758" width="2" height="2"/><rect x="993" y="761" width="2" height="2"/><rect x="996" y="761" width="2" height="2"/><rect x="990" y="764" width="2" height="2"/><rect x="993" y="764" width="2" height="2"/><rect x="996" y="764" width="2" height="2"/></g>
</svg>
<!--BOT-END-->
<!--TEXT-START-->
<span class="t" style="left:17px;top:3px;font-size:9.8px;color:#1e1e1e;transform:translateY(0.00px) scaleX(0.9575);">КОМПАС-3D V12 - [Schwertboot.m3d]</span>
<span class="t" style="left:28px;top:21px;font-size:10.4px;color:#27317f;transform:translateY(0.00px) scaleX(0.9003);"><u>Ф</u>айл</span>
<span class="t" style="left:63px;top:21px;font-size:10.4px;color:#27317f;transform:translateY(0.00px) scaleX(0.9165);"><u>Р</u>едактор</span>
<span class="t" style="left:116.5px;top:21px;font-size:10.4px;color:#27317f;transform:translateY(0.00px) scaleX(0.8771);"><u>В</u>ид</span>
<span class="t" style="left:145px;top:21px;font-size:10.4px;color:#27317f;transform:translateY(0.00px) scaleX(0.9052);">Опера<u>ц</u>ии</span>
<span class="t" style="left:201px;top:21px;font-size:10.4px;color:#27317f;transform:translateY(0.00px) scaleX(0.9047);">С<u>п</u>ецификация</span>
<span class="t" style="left:279.5px;top:21px;font-size:10.4px;color:#27317f;transform:translateY(0.00px) scaleX(0.8709);">С<u>е</u>рвис</span>
<span class="t" style="left:322px;top:21px;font-size:10.4px;color:#27317f;transform:translateY(0.00px) scaleX(0.9521);"><u>О</u>кно</span>
<span class="t" style="left:356.5px;top:21px;font-size:10.4px;color:#27317f;transform:translateY(0.00px) scaleX(0.8586);"><u>С</u>правка</span>
<span class="t" style="left:403.5px;top:21px;font-size:10.4px;color:#27317f;transform:translateY(0.00px) scaleX(0.9414);"><u>Б</u>иблиотеки</span>
<span class="t" style="left:31.5px;top:61px;font-size:10.3px;color:#1e1e1e;transform:translateY(0.70px) scaleX(0.8724);">1.0</span>
<span class="t" style="left:453px;top:41px;font-size:10.3px;color:#1e1e1e;transform:translateY(0.40px) scaleX(0.9206);">0.0623</span>
<span class="t" style="left:36.4px;top:88px;font-size:9.5px;color:#3f4f63;font-weight:700;transform:translateY(0.20px) scaleX(1.0548);">Дерево модели</span>
<span class="t" style="left:79.2px;top:125px;font-size:9.7px;color:#231c1c;transform:translateY(0.40px) scaleX(0.9221);">Заплатка:3</span>
<span class="t" style="left:79.2px;top:141px;font-size:9.7px;color:#231c1c;transform:translateY(0.00px) scaleX(0.9626);">Макро:1</span>
<span class="t" style="left:85.4px;top:156px;font-size:9.7px;color:#231c1c;transform:translateY(0.60px) scaleX(0.9619);clip-path:inset(-2px 3.3px -2px 0);">Кривая пересечени</span>
<span class="t" style="left:41.2px;top:221px;font-size:9.7px;color:#34507a;transform:translateY(0.70px) scaleX(0.9768);">Построение</span>
<span class="t" style="left:32.2px;top:363px;font-size:9.5px;color:#4a4644;font-weight:700;transform:translateY(0.00px) scaleX(1.0363);">Линейчатая поверхность</span>
<span class="t" style="left:32.2px;top:379px;font-size:10px;color:#5c5c5c;transform:translateY(0.20px) scaleX(0.9731);">Построение линейчатой</span>
<span class="t" style="left:32.2px;top:389px;font-size:10px;color:#5c5c5c;transform:translateY(0.40px) scaleX(0.9679);">поверхности по двум кривым</span>
<span class="t" style="left:93.5px;top:713px;font-size:9.5px;color:#1e1e1e;transform:translateY(0.80px) scaleX(0.9005);">Кривая <u>1</u></span>
<span class="t" style="left:137px;top:713px;font-size:10.2px;color:#1e1e1e;transform:translateY(0.80px) scaleX(0.9345);">Ребро.Линейчатая</span>
<span class="t" style="left:239.6px;top:713px;font-size:9.5px;color:#1e1e1e;transform:translateY(0.80px) scaleX(0.9031);">Кривая <u>2</u></span>
<span class="t" style="left:283px;top:713px;font-size:10.2px;color:#1e1e1e;transform:translateY(0.80px) scaleX(0.9003);clip-path:inset(-2px 2.5px -2px 0);">Ребро.Сшивка пове</span>
<span class="t" style="left:386.4px;top:713px;font-size:9.7px;color:#1e1e1e;transform:translateY(0.80px) scaleX(0.9897);">Проверка самопересеч<u>е</u>ний</span>
<span class="t" style="left:80.5px;top:736px;font-size:10.2px;color:#2a3a7a;transform:translateY(0.80px) scaleX(0.9022);">Параметры</span>
<span class="t" style="left:153px;top:736px;font-size:10.2px;color:#2a3a7a;transform:translateY(0.80px) scaleX(0.9064);">Разбиение</span>
<span class="t" style="left:222.4px;top:736px;font-size:10.2px;color:#2a3a7a;transform:translateY(0.80px) scaleX(0.8763);">Свойства</span>
<span class="t" style="left:5px;top:756px;font-size:10px;color:#2a3a7a;transform:translateY(0.80px) scaleX(0.9687);">Построение линейчатой поверхности по двум кривым</span>
<!--TEXT-END-->
</body>
</html>
